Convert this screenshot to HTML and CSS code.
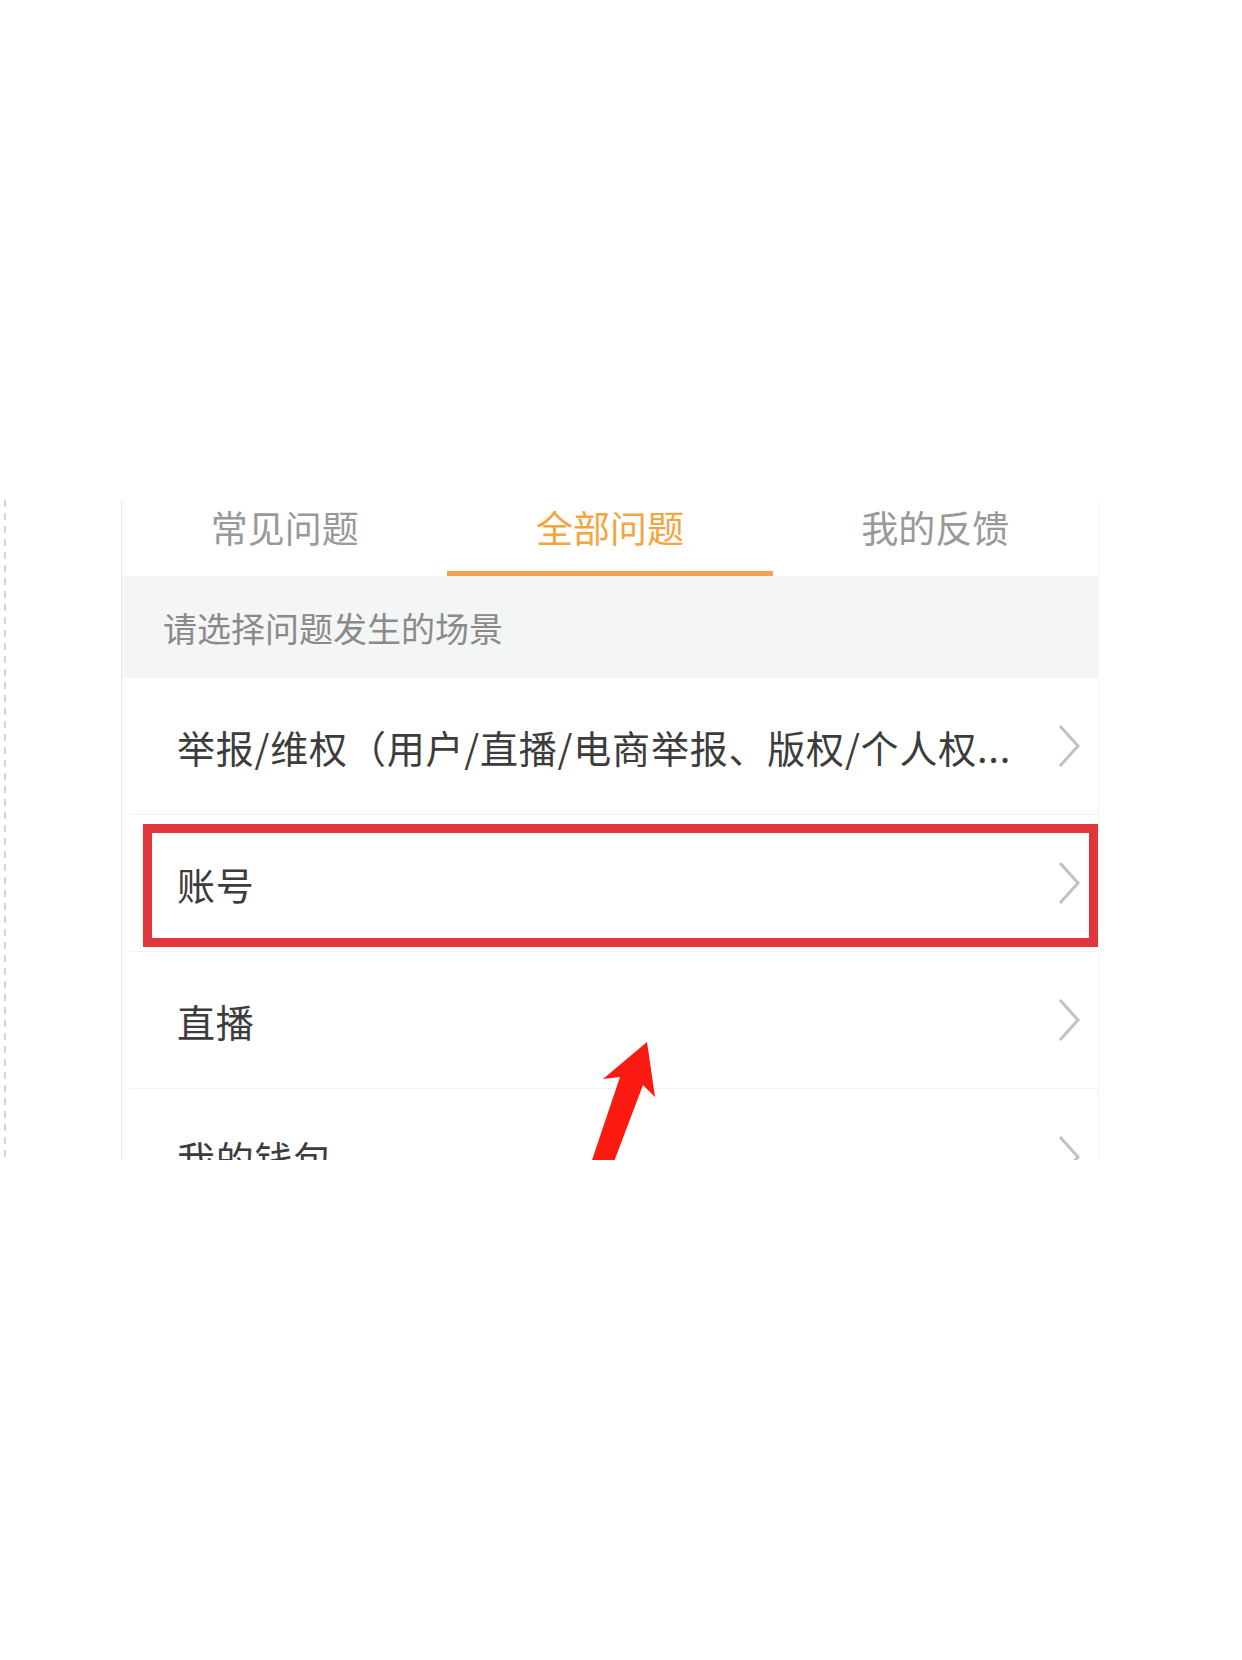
FILE: index.html
```html
<!DOCTYPE html>
<html lang="zh-CN">
<head>
<meta charset="utf-8">
<title>全部问题</title>
<link rel="stylesheet" href="styles.css">
</head>
<body>
<div class="stage">
  <div class="dash"></div>
  <div class="card">
    <div class="tabs">
      <div class="tab">常见问题</div>
      <div class="tab active">全部问题</div>
      <div class="tab">我的反馈</div>
    </div>
    <div class="section-head">请选择问题发生的场景</div>
    <div class="row">
      <span class="row-text">举报/维权（用户/直播/电商举报、版权/个人权...</span>
      <svg class="chev" viewBox="0 0 24 44" width="24" height="44"><polyline points="3,2 21,22 3,42"/></svg>
    </div>
    <div class="row">
      <span class="row-text">账号</span>
      <svg class="chev" viewBox="0 0 24 44" width="24" height="44"><polyline points="3,2 21,22 3,42"/></svg>
    </div>
    <div class="row">
      <span class="row-text">直播</span>
      <svg class="chev" viewBox="0 0 24 44" width="24" height="44"><polyline points="3,2 21,22 3,42"/></svg>
    </div>
    <div class="row">
      <span class="row-text">我的钱包</span>
      <svg class="chev" viewBox="0 0 24 44" width="24" height="44"><polyline points="3,2 21,22 3,42"/></svg>
    </div>
    <div class="highlight"></div>
    <svg class="arrow" viewBox="0 0 80 150" width="80" height="150">
      <polygon points="65,12 73,67 61,55 27,145 5,145 38,47 21,49"/>
    </svg>
  </div>
</div>
</body>
</html>
```
FILE: styles.css
```css
html, body {
  margin: 0;
  padding: 0;
  background: #ffffff;
}

body {
  width: 1242px;
  height: 1660px;
  font-family: "Noto Sans CJK SC", "Noto Sans", sans-serif;
}

.stage {
  display: flex;
  align-items: flex-start;
  padding-top: 500px;
}

.dash {
  margin-left: 4px;
  width: 2px;
  height: 660px;
  background: repeating-linear-gradient(to bottom, #d4d4d4 0 7px, transparent 7px 13px);
}

.card {
  position: relative;
  margin-left: 115px;
  width: 976px;
  height: 660px;
  overflow: hidden;
  border-left: 1px solid #e6e6e6;
  border-right: 1px solid #f5f5f5;
  background: #ffffff;
}

.tabs {
  display: flex;
  height: 76px;
}

.tab {
  flex: 1;
  text-align: center;
  font-size: 37px;
  line-height: 54px;
  padding-top: 0;
  color: #999999;
  box-sizing: border-box;
  border-bottom: 5px solid transparent;
}

.tab.active {
  color: #f3a53f;
  border-bottom-color: #f1a252;
}

.section-head {
  height: 102px;
  display: flex;
  align-items: center;
  padding-left: 41px;
  background: #f4f5f5;
  font-size: 34px;
  color: #8a8a8a;
}

.row {
  box-sizing: border-box;
  height: 137px;
  margin-left: 8px;
  padding-left: 47px;
  padding-right: 17px;
  display: flex;
  align-items: center;
  justify-content: space-between;
  border-bottom: 1px solid #f0f0f0;
}

.row-text {
  font-size: 38px;
  letter-spacing: 0.8px;
  color: #3c3c3c;
  white-space: nowrap;
}

.chev {
  flex: none;
}

.chev polyline {
  fill: none;
  stroke: #c2c2c2;
  stroke-width: 3;
}

.highlight {
  position: absolute;
  left: 21px;
  top: 324px;
  width: 955px;
  height: 123px;
  box-sizing: border-box;
  border: 9px solid #e3363c;
}

.arrow {
  position: absolute;
  left: 460px;
  top: 530px;
}

.arrow polygon {
  fill: #fb1a12;
}
```
